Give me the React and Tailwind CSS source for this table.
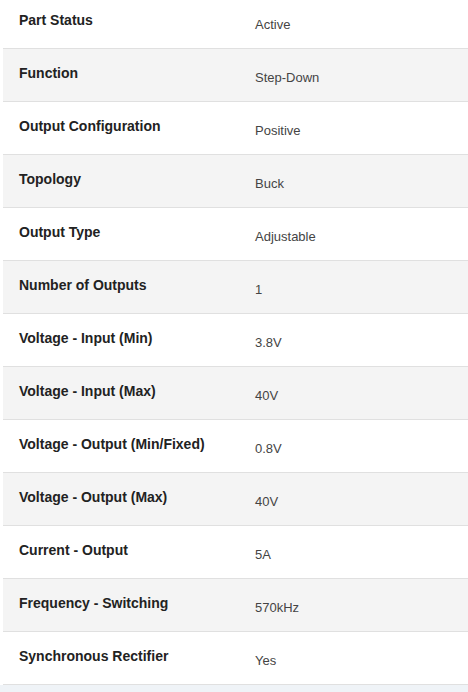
const specs = [
  ['Part Status', 'Active'],
  ['Function', 'Step-Down'],
  ['Output Configuration', 'Positive'],
  ['Topology', 'Buck'],
  ['Output Type', 'Adjustable'],
  ['Number of Outputs', '1'],
  ['Voltage - Input (Min)', '3.8V'],
  ['Voltage - Input (Max)', '40V'],
  ['Voltage - Output (Min/Fixed)', '0.8V'],
  ['Voltage - Output (Max)', '40V'],
  ['Current - Output', '5A'],
  ['Frequency - Switching', '570kHz'],
  ['Synchronous Rectifier', 'Yes'],
];

function SpecRow({ label, value, shaded }) {
  return (
    <div
      className={`flex h-[53px] border-b border-[#e0e0e0] ${shaded ? 'bg-[#f4f4f4]' : 'bg-white'}`}
    >
      <div className="w-[236px] shrink-0 pl-4 pt-[14px] text-[14px] leading-5 font-bold text-[#222]">
        {label}
      </div>
      <div className="flex-1 pl-4 pt-[19px] text-[13px] leading-5 text-[#444]">{value}</div>
    </div>
  );
}

export default function App() {
  return (
    <div className="min-h-[692px] bg-[#eff3f7] font-['Liberation_Sans',Arial,sans-serif] overflow-hidden">
      <div className="bg-white pl-[3px] -mt-[4px]">
        {specs.map(([label, value], i) => (
          <SpecRow key={label} label={label} value={value} shaded={i % 2 === 1} />
        ))}
      </div>
    </div>
  );
}
